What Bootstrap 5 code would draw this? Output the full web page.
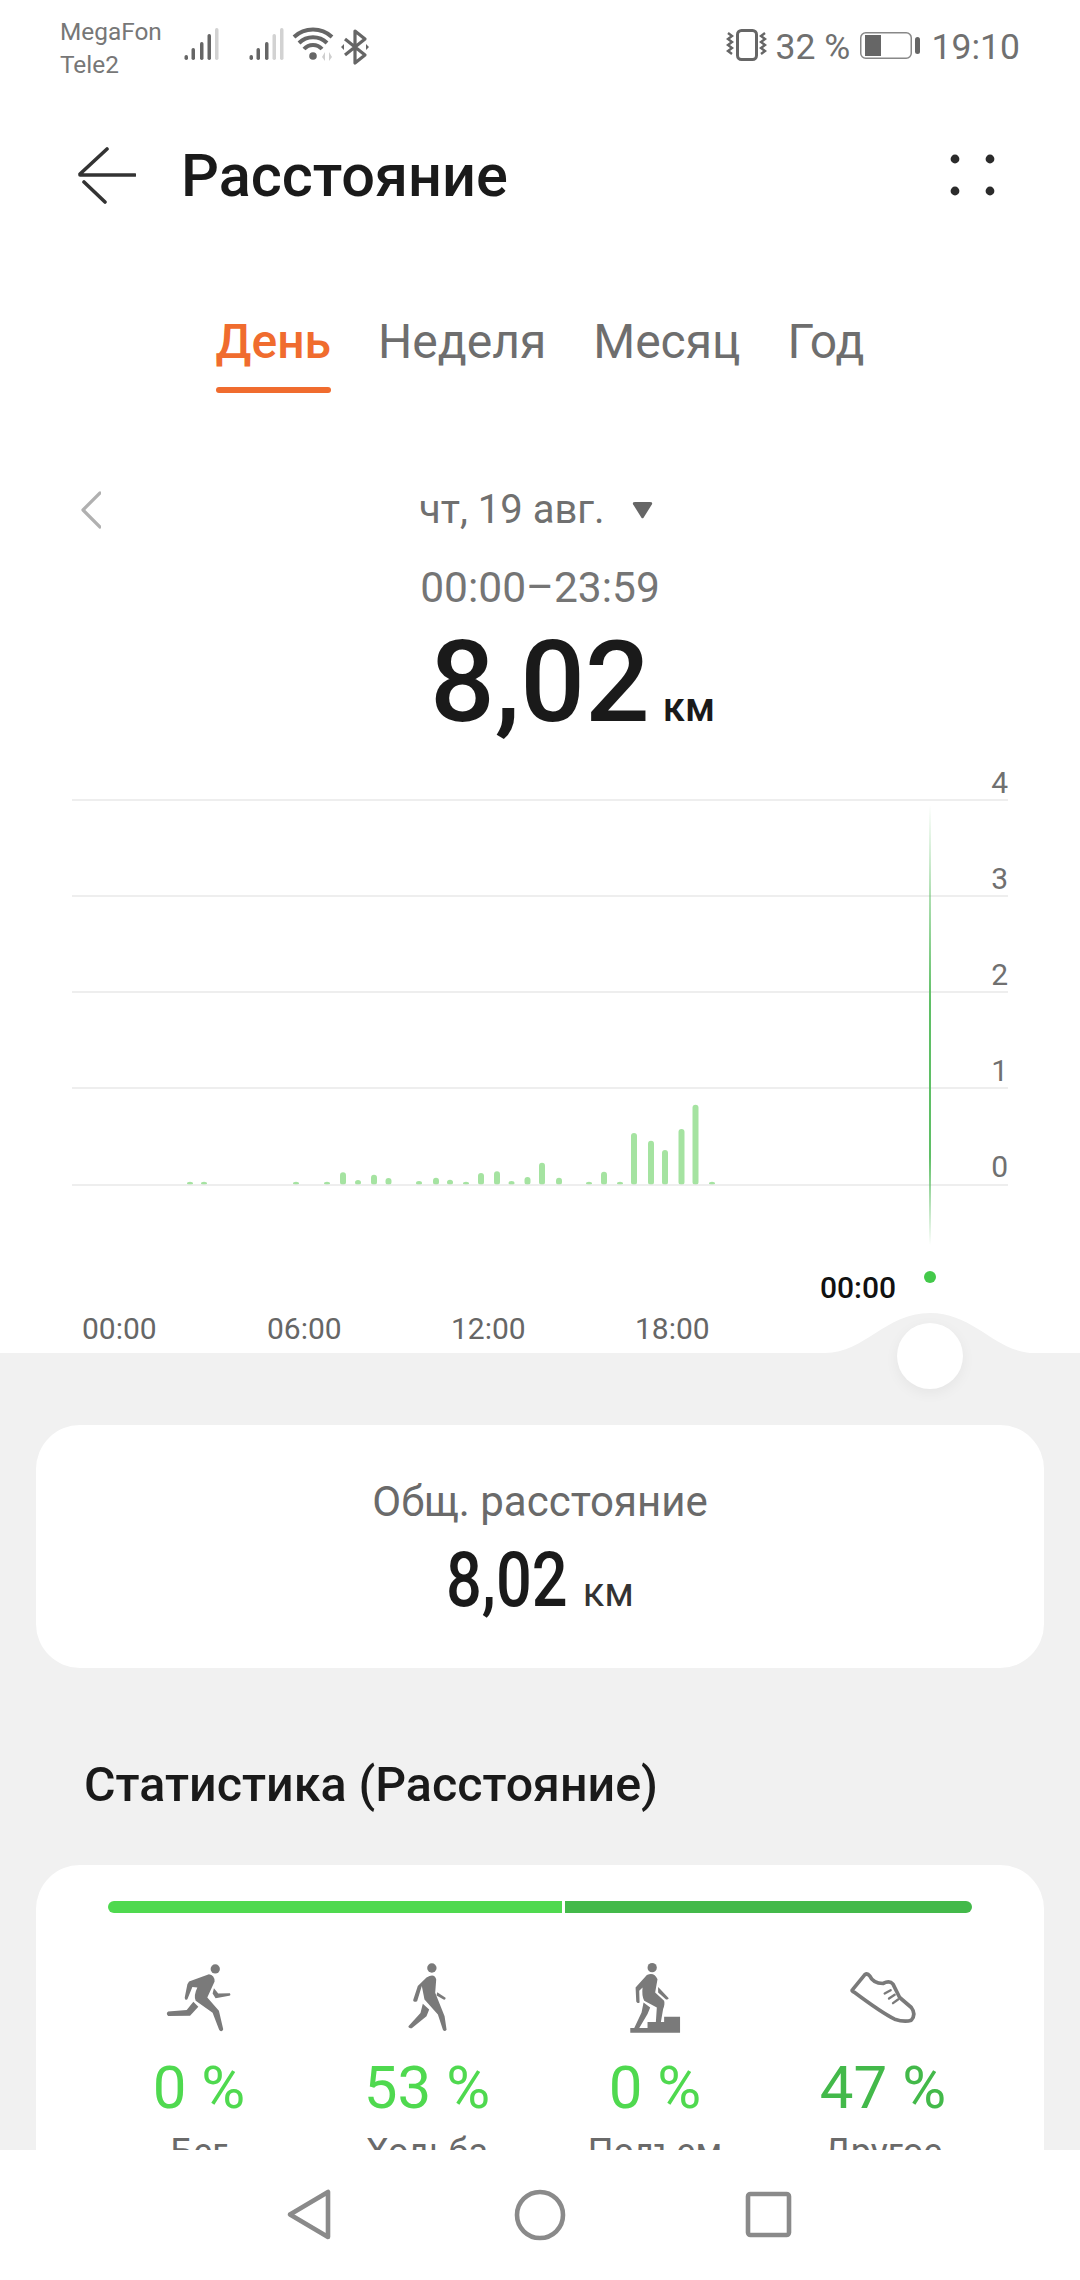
<!DOCTYPE html>
<html lang="ru">
<head>
    <meta charset="UTF-8">
    <meta name="viewport" content="width=device-width, initial-scale=1.0">
    <title>Расстояние</title>
    <link rel="stylesheet" href="https://cdn.jsdelivr.net/npm/bootstrap@5.3.3/dist/css/bootstrap.min.css">
    <style>
        body { font-family: Roboto, "Noto Sans", sans-serif; background: #fff; color: #1a1a1a; }
        .phone { width: 1080px; height: 2280px; overflow: hidden; }
        .scroll-area { height: 2150px; overflow: hidden; flex: none; }

        .status-bar { height: 90px; color: #707070; font-size: 35.5px; line-height: 40px; }
        .carrier { width: 124px; margin-left: 60px; font-size: 24.4px; line-height: 33px; color: #777; padding-top: 5px; }
        .status-pct { margin-left: 9px; width: 84px; padding-top: 4px; }
        .status-time { margin-left: 12px; margin-right: 60px; padding-top: 4px; }

        .top-bar { height: 170px; }
        .page-title { font-size: 59.5px; font-weight: 500; line-height: 66px; margin: 2px 0 0 45px; color: #1a1a1a; }
        .dots-menu { margin-right: 75px; }

        .range-tabs { margin-top: 55px; gap: 47px; height: 85px; }
        .range-tab { font-size: 48px; line-height: 54px; color: #6e6e6e; padding: 0; }
        .range-tab.active { color: #f06c2e; font-weight: 500; position: relative; }
        .range-tab.active::after { content: ""; display: block; height: 6px; border-radius: 3px; background: #f06c2e; margin-top: 18px; }

        .date-row { margin-top: 85px; height: 50px; padding-left: 81px; }
        .date-text { font-size: 40px; line-height: 50px; color: #707070; margin-left: 318px; }
        .date-caret { margin-left: 27px; }
        .time-range { font-size: 42.5px; line-height: 50px; color: #757575; margin-top: 28px; }
        .total-row { padding-left: 65px; margin-top: 4px; line-height: 130px; height: 133px; }
        .total-num { font-size: 114px; font-weight: 500; color: #1a1a1a; }
        .total-unit { font-size: 40px; font-weight: 500; margin-left: 13px; color: #1a1a1a; }

        .chart-box { display: block; }
        .chart-grid { stroke: #e8e8e8; stroke-width: 1.5; }
        .chart-bar { fill: #a5e3a1; }
        .axis-text { font-size: 30px; fill: #707070; font-family: Roboto, sans-serif; }
        .hour-text { font-size: 30px; fill: #666; font-family: Roboto, sans-serif; }
        .pick-text { font-size: 30px; font-weight: 500; fill: #111; font-family: Roboto, sans-serif; }

        .lower-part { background: #f1f1f1; position: relative; padding: 72px 36px 0; height: 800px; }
        .slider-thumb { position: absolute; left: 897px; top: -30px; width: 66px; height: 66px; border-radius: 50%; background: #fff; box-shadow: 0 4px 14px rgba(0, 0, 0, .05); }
        .stat-card { border: 0; border-radius: 44px; background: #fff; }
        .sum-card { height: 243px; padding-top: 52px; }
        .sum-label { font-size: 42px; line-height: 50px; color: #6a6a6a; }
        .sum-value { line-height: 84px; margin-top: 11px; }
        .sum-num { display: inline-block; font-size: 76px; font-weight: 500; transform: scaleX(.83); transform-origin: left; margin-right: -24px; }
        .sum-unit { font-size: 40px; margin-left: 14px; color: #333; }
        .section-head { font-size: 48.4px; font-weight: 500; line-height: 56px; margin: 89px 0 52px 48px; color: #1a1a1a; }
        .mode-card { padding: 36px 47px 0 49px; height: 400px; }
        .mode-bar { height: 12px; margin: 0 25px 0 23px; border-radius: 6px; background: #fff; gap: 3px; }
        .mode-bar .progress-bar { background: #4fd94f; }
        .mode-bar .progress-bar + .progress-bar { background: #43b94a; }
        .icon-slot { height: 92px; margin-top: 38px; }
        .mode-pct { font-size: 60px; line-height: 66px; color: #4fd94f; margin-top: 12px; }
        .mode-pct.dark-green { color: #43b94a; }
        .mode-name { font-size: 36px; line-height: 50px; color: #6a6a6a; margin-top: 6px; }

        .soft-nav { height: 130px; background: #fff; flex: none; }
    </style>
</head>
<body>
<div class="phone d-flex flex-column">
    <div class="scroll-area">
        <!-- status bar -->
        <div class="status-bar d-flex align-items-center">
            <div class="carrier">MegaFon<br>Tele2</div>
            <svg width="186" height="90" viewBox="184 0 186 90" fill="none">
                <g fill="#666">
                    <rect x="184.5" y="55" width="3.5" height="5" rx="1.7"/>
                    <rect x="191.5" y="48" width="3.5" height="12" rx="1.7"/>
                    <rect x="200" y="42" width="3.5" height="18" rx="1.7"/>
                    <rect x="207.5" y="34" width="3.5" height="26" rx="1.7"/>
                    <rect x="249.5" y="55" width="3.5" height="5" rx="1.7"/>
                    <rect x="256.5" y="48" width="3.5" height="12" rx="1.7"/>
                    <rect x="265" y="42" width="3.5" height="18" rx="1.7"/>
                </g>
                <g fill="#d2d2d2">
                    <rect x="215" y="28" width="3.5" height="32" rx="1.7"/>
                    <rect x="272.5" y="34" width="3.5" height="26" rx="1.7"/>
                    <rect x="280" y="28" width="3.5" height="32" rx="1.7"/>
                </g>
                <g stroke="#666" stroke-width="4">
                    <path d="M294 37 A28 28 0 0 1 332 37"/>
                    <path d="M299 43 A20 20 0 0 1 327 43"/>
                    <path d="M304 49 A12 12 0 0 1 322 49"/>
                </g>
                <circle cx="313" cy="56" r="3.8" fill="#666"/>
                <path d="M325 52v9l-3-4zM329 52v9l3-4z" fill="#cfcfcf"/>
                <path d="M345 39 L365 55 L355 63 V31 L365 39 L345 55" stroke="#666" stroke-width="3.2" stroke-linejoin="round"/>
                <path d="M344 44v6l-3-3zM366 44v6l3-3z" fill="#666"/>
            </svg>
            <div class="ms-auto d-flex align-items-center">
                <svg width="41" height="36" viewBox="727 27 41 36" fill="none" stroke="#666">
                    <rect x="738.5" y="30.5" width="19" height="29" rx="4" stroke-width="3"/>
                    <path d="M729 33l4 3-4 3 4 3-4 3 4 3-4 3 4 3M766 33l-4 3 4 3-4 3 4 3-4 3 4 3-4 3" stroke-width="2.4"/>
                </svg>
                <span class="status-pct">32 %</span>
                <svg width="60" height="30" viewBox="861 30 60 30" fill="none">
                    <rect x="861.75" y="32.75" width="50.5" height="25.5" rx="5" stroke="#888" stroke-width="1.5"/>
                    <rect x="866" y="35" width="16" height="21" fill="#666"/>
                    <rect x="916" y="37" width="5" height="17" rx="2.5" fill="#666"/>
                </svg>
                <span class="status-time">19:10</span>
            </div>
        </div>

        <!-- title row -->
        <div class="top-bar d-flex align-items-center">
            <svg class="ms-0" width="136" height="70" viewBox="0 138 136 70" fill="none" stroke="#333" stroke-width="3.6" stroke-linecap="round">
                <path d="M80 173H135M80 172L107 147M84 180L105 200"/>
            </svg>
            <h1 class="page-title">Расстояние</h1>
            <svg class="ms-auto dots-menu" width="60" height="50" viewBox="945 148 60 50" fill="#2b2b2b">
                <circle cx="955" cy="157" r="4.4"/><circle cx="990" cy="157" r="4.4"/>
                <circle cx="955" cy="189" r="4.4"/><circle cx="990" cy="189" r="4.4"/>
            </svg>
        </div>

        <!-- period tabs -->
        <nav class="nav justify-content-center range-tabs">
            <a class="nav-link range-tab active" href="#">День</a>
            <a class="nav-link range-tab" href="#">Неделя</a>
            <a class="nav-link range-tab" href="#">Месяц</a>
            <a class="nav-link range-tab" href="#">Год</a>
        </nav>

        <!-- date -->
        <div class="date-row d-flex align-items-center">
            <svg width="20" height="38" viewBox="0 0 20 38" fill="none" stroke="#b0b0b0" stroke-width="3.2" stroke-linecap="round" stroke-linejoin="round">
                <path d="M19 2L2 19L19 36"/>
            </svg>
            <span class="date-text">чт, 19 авг.</span>
            <svg class="date-caret" width="21" height="17" viewBox="0 0 20 16" fill="#666"><path d="M1 2Q0 0 3 0H17Q20 0 19 2L11 15Q10 16 9 15Z"/></svg>
        </div>
        <div class="time-range text-center">00:00–23:59</div>
        <div class="total-row text-center"><span class="total-num">8,02</span><span class="total-unit">км</span></div>

        <!-- chart -->
        <svg id="distChart" class="chart-box" width="1080" height="603" viewBox="0 750 1080 603">
            <defs>
                <linearGradient id="cursorLine" x1="0" y1="0" x2="0" y2="1">
                    <stop offset="0" stop-color="#5fbf66" stop-opacity="0"/>
                    <stop offset=".2" stop-color="#5fbf66" stop-opacity=".5"/>
                    <stop offset=".45" stop-color="#5fbf66"/>
                    <stop offset=".8" stop-color="#5fbf66"/>
                    <stop offset="1" stop-color="#5fbf66" stop-opacity="0"/>
                </linearGradient>
            </defs>
            <line class="chart-grid" x1="72" x2="1008" y1="800" y2="800"/>
            <line class="chart-grid" x1="72" x2="1008" y1="896" y2="896"/>
            <line class="chart-grid" x1="72" x2="1008" y1="992" y2="992"/>
            <line class="chart-grid" x1="72" x2="1008" y1="1088" y2="1088"/>
            <line class="chart-grid" x1="72" x2="1008" y1="1185" y2="1185"/>
            <text class="axis-text" text-anchor="end" x="1008" y="793">4</text>
            <text class="axis-text" text-anchor="end" x="1008" y="889">3</text>
            <text class="axis-text" text-anchor="end" x="1008" y="985">2</text>
            <text class="axis-text" text-anchor="end" x="1008" y="1081">1</text>
            <text class="axis-text" text-anchor="end" x="1008" y="1177">0</text>
            <rect x="929" y="805" width="2" height="440" fill="url(#cursorLine)"/>
            <text class="hour-text" x="82" y="1339">00:00</text>
            <text class="hour-text" x="267" y="1339">06:00</text>
            <text class="hour-text" x="451" y="1339">12:00</text>
            <text class="hour-text" x="635" y="1339">18:00</text>
            <text class="pick-text" x="820" y="1298">00:00</text>
            <circle cx="930" cy="1277" r="6" fill="#43c94a"/>
            <path d="M825 1353C865 1353 885 1313 930 1313C975 1313 995 1353 1035 1353Z" fill="#f1f1f1"/>
        </svg>

        <div class="lower-part">
            <div class="slider-thumb"></div>
            <div class="card stat-card sum-card text-center">
                <div class="sum-label">Общ. расстояние</div>
                <div class="sum-value"><span class="sum-num">8,02</span><span class="sum-unit">км</span></div>
            </div>
            <h2 class="section-head">Статистика (Расстояние)</h2>
            <div class="card stat-card mode-card">
                <div class="progress mode-bar">
                    <div class="progress-bar" style="width: 52.6%"></div>
                    <div class="progress-bar flex-grow-1"></div>
                </div>
                <div class="row g-0 text-center">
                    <div class="col-3">
                        <div class="icon-slot d-flex align-items-center justify-content-center">
                            <svg width="70" height="73" viewBox="40 30 210 220" fill="#7a7a7a">
                                <circle cx="194" cy="54" r="14"/>
                                <path d="M115 92L175 70Q192 72 192 92L170 140L205 180L218 236Q214 246 206 238L186 186L135 150Q128 135 140 110L125 108L110 145Q102 150 102 140L110 100Z"/>
                                <path d="M128 153L143 168L118 195L52 196Q44 188 52 182L108 178Z"/>
                                <path d="M190 112L203 128L238 127Q242 133 236 135L195 142L186 128Z"/>
                            </svg>
                        </div>
                        <div class="mode-pct">0 %</div>
                        <div class="mode-name">Бег</div>
                    </div>
                    <div class="col-3">
                        <div class="icon-slot d-flex align-items-center justify-content-center">
                            <svg width="42" height="72" viewBox="765 35 125 215" fill="#7a7a7a">
                                <circle cx="842" cy="56" r="14"/>
                                <path d="M826 84Q850 70 855 90L852 130L880 200L886 240Q880 248 875 240L860 195L820 150L812 110L798 155Q788 160 786 152L800 110Z"/>
                                <path d="M815 163L834 180L826 200L782 236Q772 236 772 230L808 190Z"/>
                                <path d="M858 128L883 145Q884 152 877 150L856 138Z"/>
                            </svg>
                        </div>
                        <div class="mode-pct">53 %</div>
                        <div class="mode-name">Ходьба</div>
                    </div>
                    <div class="col-3">
                        <div class="icon-slot d-flex align-items-center justify-content-center">
                            <svg width="52" height="73" viewBox="25 30 155 220" fill="#7a7a7a">
                                <circle cx="94" cy="50" r="14"/>
                                <path d="M78 72Q100 62 110 85L103 125L130 150Q133 160 127 175L120 215L105 215L108 170L70 150Q62 135 65 110L55 120L56 155Q50 160 46 152L44 110Z"/>
                                <path d="M68 155L88 170L80 190L55 232L40 232L62 185Z"/>
                                <path d="M112 108L144 142Q140 148 135 145L112 125Z"/>
                                <path d="M28 232H80V214H130V198H178V246H28Z"/>
                            </svg>
                        </div>
                        <div class="mode-pct">0 %</div>
                        <div class="mode-name">Подъем</div>
                    </div>
                    <div class="col-3">
                        <div class="icon-slot d-flex align-items-center justify-content-center">
                            <svg width="70" height="57" viewBox="680 55 210 170" fill="none" stroke="#7a7a7a" stroke-linecap="round" stroke-linejoin="round">
                                <path stroke-width="11" d="M695 115L730 72Q738 66 745 75Q755 98 785 98Q805 88 815 100L835 140L870 170Q885 190 870 208Q850 215 820 205Q780 185 700 125Q688 120 695 115Z"/>
                                <path stroke-width="7" d="M790 128L808 118M803 143L820 132M815 157L830 146"/>
                            </svg>
                        </div>
                        <div class="mode-pct dark-green">47 %</div>
                        <div class="mode-name">Другое</div>
                    </div>
                </div>
            </div>
        </div>
    </div>

    <!-- android nav -->
    <div class="soft-nav d-flex">
        <svg width="1080" height="130" viewBox="0 2150 1080 130" fill="none" stroke="#8a8a8a" stroke-width="4.6" stroke-linejoin="round">
            <path d="M328 2192V2237L290 2214.5Z"/>
            <circle cx="540" cy="2215" r="23"/>
            <rect x="748" y="2194" width="41" height="41" rx="2.5"/>
        </svg>
    </div>
</div>

<script src="https://cdn.jsdelivr.net/npm/bootstrap@5.3.3/dist/js/bootstrap.bundle.min.js"></script>
<script>
    const bars = [[190,3.3],[204,3.3],[296,3.3],[327,3.3],[343,12.7],[358,5],[374,10.3],[388.5,7],[419,4],[436,7.3],[450,5.3],[466,3.3],[481,12],[497,13.7],[511.5,4],[527.5,8],[542,22.3],[559,7.3],[589,3.3],[604,13.3],[620,3.3],[634,52],[651,44.3],[665,35],[681.5,56],[695.5,80.3],[712,3.3]];
    const chart = document.getElementById("distChart");
    const zeroLine = chart.querySelectorAll(".chart-grid")[4];
    bars.forEach(function(b) {
        const r = document.createElementNS("http://www.w3.org/2000/svg", "rect");
        r.setAttribute("class", "chart-bar");
        r.setAttribute("x", b[0] - 3);
        r.setAttribute("y", 1185 - b[1]);
        r.setAttribute("width", 6);
        r.setAttribute("height", b[1]);
        r.setAttribute("rx", 3);
        chart.insertBefore(r, zeroLine);
    });
</script>
</body>
</html>
